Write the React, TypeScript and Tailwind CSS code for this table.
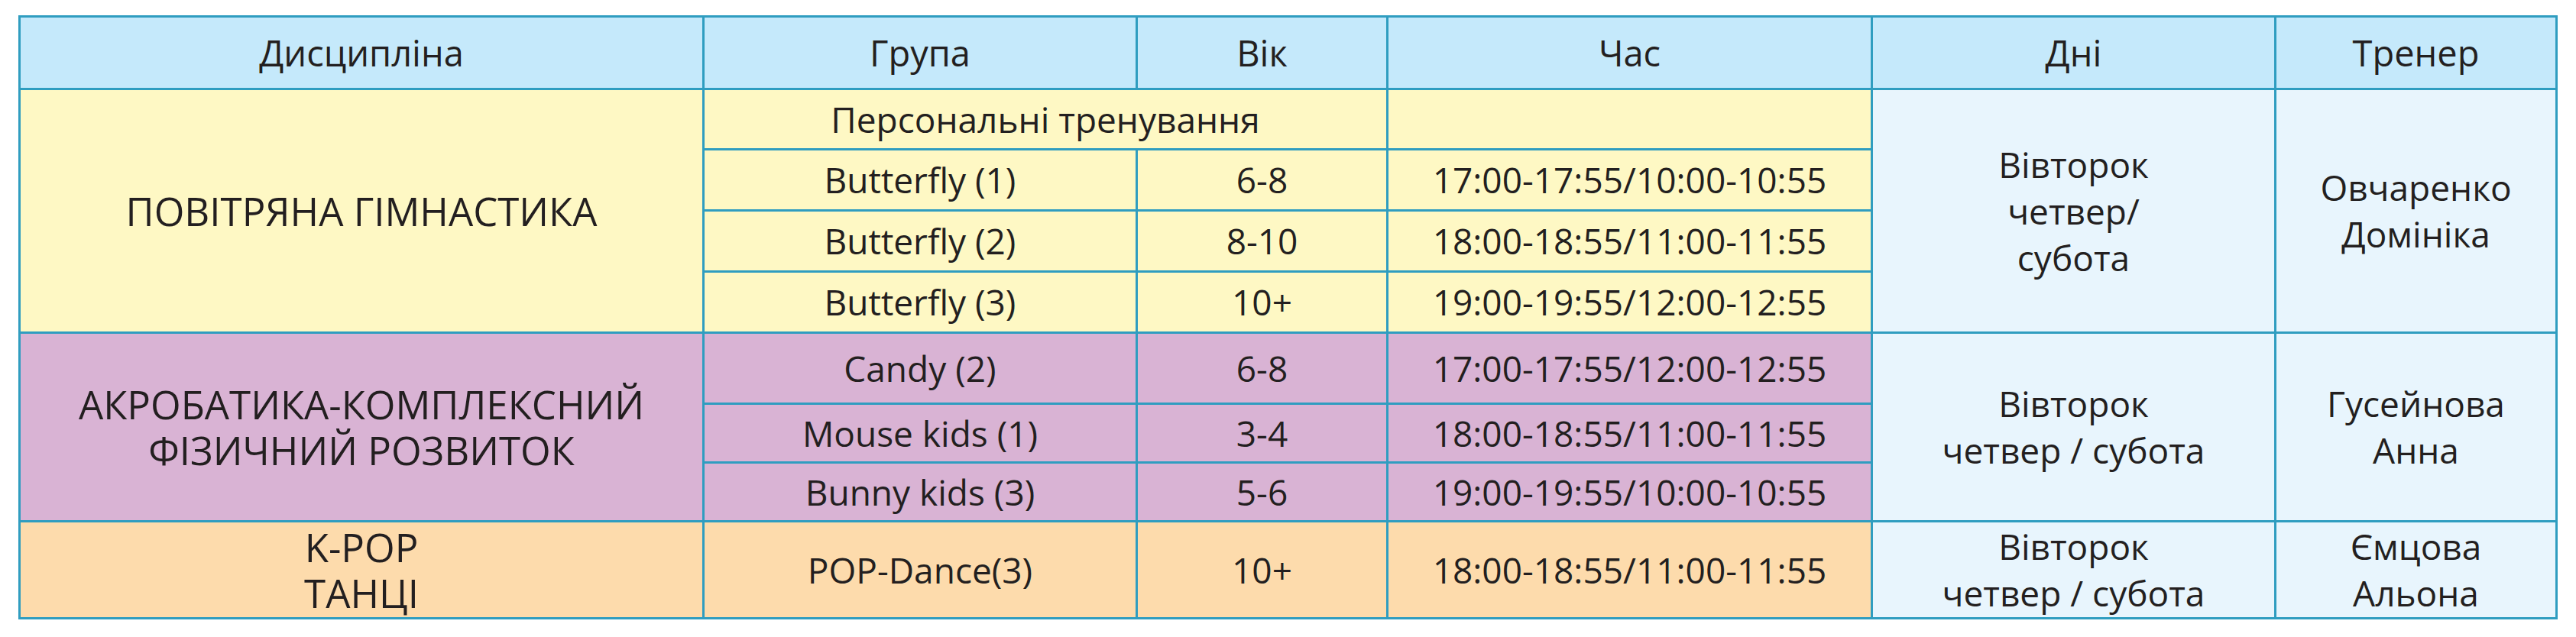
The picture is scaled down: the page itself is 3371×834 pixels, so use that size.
import React from 'react';

type Lesson = { group: string; age: string; time: string };

type Block = {
  discipline: string[];
  bg: string;
  lessons: Lesson[];
  heights: string[];
  days: string[];
  trainer: string[];
};

const blocks: Block[] = [
  {
    discipline: ['ПОВІТРЯНА ГІМНАСТИКА'],
    bg: 'bg-[#fef8c4]',
    lessons: [
      { group: 'Butterfly (1)', age: '6-8', time: '17:00-17:55/10:00-10:55' },
      { group: 'Butterfly (2)', age: '8-10', time: '18:00-18:55/11:00-11:55' },
      { group: 'Butterfly (3)', age: '10+', time: '19:00-19:55/12:00-12:55' },
    ],
    heights: ['h-[80px]', 'h-[80px]', 'h-[80px]'],
    days: ['Вівторок', 'четвер/', 'субота'],
    trainer: ['Овчаренко', 'Домініка'],
  },
  {
    discipline: ['АКРОБАТИКА-КОМПЛЕКСНИЙ', 'ФІЗИЧНИЙ РОЗВИТОК'],
    bg: 'bg-[#d9b3d4]',
    lessons: [
      { group: 'Candy (2)', age: '6-8', time: '17:00-17:55/12:00-12:55' },
      { group: 'Mouse kids (1)', age: '3-4', time: '18:00-18:55/11:00-11:55' },
      { group: 'Bunny kids (3)', age: '5-6', time: '19:00-19:55/10:00-10:55' },
    ],
    heights: ['h-[93px]', 'h-[77px]', 'h-[77px]'],
    days: ['Вівторок', 'четвер / субота'],
    trainer: ['Гусейнова', 'Анна'],
  },
  {
    discipline: ['K-POP', 'ТАНЦІ'],
    bg: 'bg-[#fddbac]',
    lessons: [{ group: 'POP-Dance(3)', age: '10+', time: '18:00-18:55/11:00-11:55' }],
    heights: ['h-[127px]'],
    days: ['Вівторок', 'четвер / субота'],
    trainer: ['Ємцова', 'Альона'],
  },
];

const headers = ['Дисципліна', 'Група', 'Вік', 'Час', 'Дні', 'Тренер'];

const cell = 'border-[3px] border-[#2f9dc0] text-center align-middle p-0 whitespace-nowrap';

// multi-line cell text kept as one text block
const Lines = ({ lines }: { lines: string[] }) => (
  <>
    {lines.map((l, i) => (
      <React.Fragment key={i}>
        {i > 0 && <br />}
        {l}
      </React.Fragment>
    ))}
  </>
);

export default function App() {
  return (
    <div className="bg-white w-[3371px] h-[834px] pt-[20px] pl-[24px] font-['Open_Sans',sans-serif] text-[#231f20]">
      <table className="table-fixed border-collapse w-[3323px]">
        <colgroup>
          <col className="w-[895px]" />
          <col className="w-[567px]" />
          <col className="w-[328px]" />
          <col className="w-[634px]" />
          <col className="w-[528px]" />
          <col className="w-[368px]" />
        </colgroup>
        <thead>
          <tr className="h-[95px] bg-[#c5e9fb]">
            {headers.map((h) => (
              <th key={h} className={`${cell} font-normal text-[47px] leading-[60px]`}>
                {h}
              </th>
            ))}
          </tr>
        </thead>
        <tbody className="text-[46px] leading-[61px]">
          {blocks.map((b, bi) => {
            const span = b.lessons.length + (bi === 0 ? 1 : 0);
            const first = (
              <td rowSpan={span} className={`${cell} ${b.bg} text-[51px] leading-[60px]`}>
                <Lines lines={b.discipline} />
              </td>
            );
            const side = (
              <>
                <td rowSpan={span} className={`${cell} bg-[#e8f5fd]`}>
                  <Lines lines={b.days} />
                </td>
                <td rowSpan={span} className={`${cell} bg-[#e8f5fd]`}>
                  <Lines lines={b.trainer} />
                </td>
              </>
            );
            const rows = b.lessons.map((l, li) => (
              <tr key={`${bi}-${li}`} className={b.heights[li]}>
                {bi !== 0 && li === 0 && first}
                <td className={`${cell} ${b.bg}`}>{l.group}</td>
                <td className={`${cell} ${b.bg}`}>{l.age}</td>
                <td className={`${cell} ${b.bg}`}>{l.time}</td>
                {bi !== 0 && li === 0 && side}
              </tr>
            ));
            if (bi === 0) {
              return (
                <React.Fragment key={bi}>
                  <tr className="h-[79px]">
                    {first}
                    <td colSpan={2} className={`${cell} ${b.bg}`}>
                      Персональні тренування
                    </td>
                    <td className={`${cell} ${b.bg}`} />
                    {side}
                  </tr>
                  {rows}
                </React.Fragment>
              );
            }
            return <React.Fragment key={bi}>{rows}</React.Fragment>;
          })}
        </tbody>
      </table>
    </div>
  );
}
